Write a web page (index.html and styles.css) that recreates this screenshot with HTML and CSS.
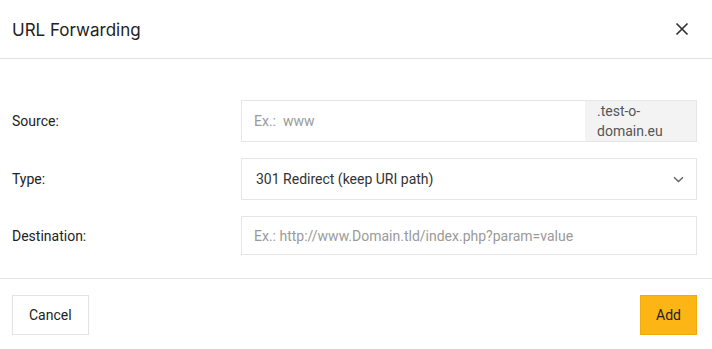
FILE: index.html
```html
<!DOCTYPE html>
<html lang="en">
<head>
  <meta charset="UTF-8">
  <meta name="viewport" content="width=device-width, initial-scale=1.0">
  <title>URL Forwarding</title>
  <link rel="stylesheet" href="styles.css">
</head>
<body>
  <div class="dialog">
    <div class="dialog-header">
      <div class="dialog-title">URL Forwarding</div>
      <button class="close-btn" aria-label="Close">
        <svg width="14" height="14" viewBox="0 0 14 14">
          <path d="M1.5 1.5 L12.5 12.5 M12.5 1.5 L1.5 12.5" stroke="#333" stroke-width="1.7" fill="none"/>
        </svg>
      </button>
    </div>

    <div class="dialog-body">
      <div class="form-row">
        <label class="form-label">Source:</label>
        <div class="input-group">
          <input class="form-input" type="text" placeholder="Ex.:  www">
          <span class="input-addon">.test-o-<br>domain.eu</span>
        </div>
      </div>
      <div class="form-row">
        <label class="form-label">Type:</label>
        <div class="select-box">
          <span>301 Redirect (keep URI path)</span>
          <svg width="11" height="7" viewBox="0 0 11 7">
            <path d="M1 1.2 L5.5 5.5 L10 1.2" stroke="#666" stroke-width="1.5" fill="none"/>
          </svg>
        </div>
      </div>
      <div class="form-row">
        <label class="form-label">Destination:</label>
        <div class="input-group dest">
          <input class="form-input" type="text" placeholder="Ex.: http://www.Domain.tld/index.php?param=value">
        </div>
      </div>
    </div>

    <div class="dialog-footer">
      <button class="button">Cancel</button>
      <button class="button primary">Add</button>
    </div>
  </div>
</body>
</html>
```

FILE: styles.css
```css
body {
  margin: 0;
  font-family: Roboto, "Liberation Sans", sans-serif;
  color: #222;
  background: #fff;
}
.dialog {
  width: 712px;
}
/* Header */
.dialog-header {
  display: flex;
  justify-content: space-between;
  align-items: center;
  height: 58px;
  padding: 0 23px 0 12px;
  border-bottom: 1px solid #e3e3e3;
}
.dialog-title {
  font-family: Inter, Roboto, sans-serif;
  font-size: 17px;
  color: #222;
  padding-top: 1px;
}
.close-btn {
  border: none;
  background: none;
  padding: 0;
  display: flex;
  cursor: pointer;
}
/* Body */
.dialog-body {
  padding: 41px 15px 23px 12px;
  display: flex;
  flex-direction: column;
  gap: 16px;
  border-bottom: 1px solid #e3e3e3;
}
.form-row {
  display: flex;
  align-items: center;
}
.form-label {
  width: 229px;
  font-size: 14px;
  color: #222;
}
.input-group {
  flex: 1;
  display: flex;
  height: 42px;
  border: 1px solid #e6e6e6;
  box-sizing: border-box;
}
.input-group.dest {
  height: 39px;
}
.form-input {
  flex: 1;
  border: none;
  outline: none;
  padding: 0 12px;
  font-family: Roboto, sans-serif;
  font-size: 14px;
  color: #222;
  min-width: 0;
}
.form-input::placeholder {
  color: #9a9a9a;
}
.input-addon {
  width: 99px;
  background: #f3f3f3;
  font-size: 14px;
  line-height: 20px;
  color: #555;
  padding: 0 0 0 12px;
  display: flex;
  align-items: center;
}
.select-box {
  flex: 1;
  height: 42px;
  box-sizing: border-box;
  border: 1px solid #e6e6e6;
  display: flex;
  align-items: center;
  justify-content: space-between;
  padding: 0 12px 0 14px;
  font-size: 14px;
  color: #333;
}
/* Footer */
.dialog-footer {
  display: flex;
  justify-content: space-between;
  padding: 16px 15px 0 12px;
}
.button {
  height: 40px;
  padding: 0 16px;
  font-family: Roboto, sans-serif;
  font-size: 14px;
  color: #222;
  background: #fff;
  border: 1px solid #e3e3e3;
  box-shadow: 0 1px 1px rgba(0, 0, 0, 0.06);
  cursor: pointer;
}
.button.primary {
  background: #fdb515;
  border-color: #f2aa0c;
  padding: 0 15px;
}
```
